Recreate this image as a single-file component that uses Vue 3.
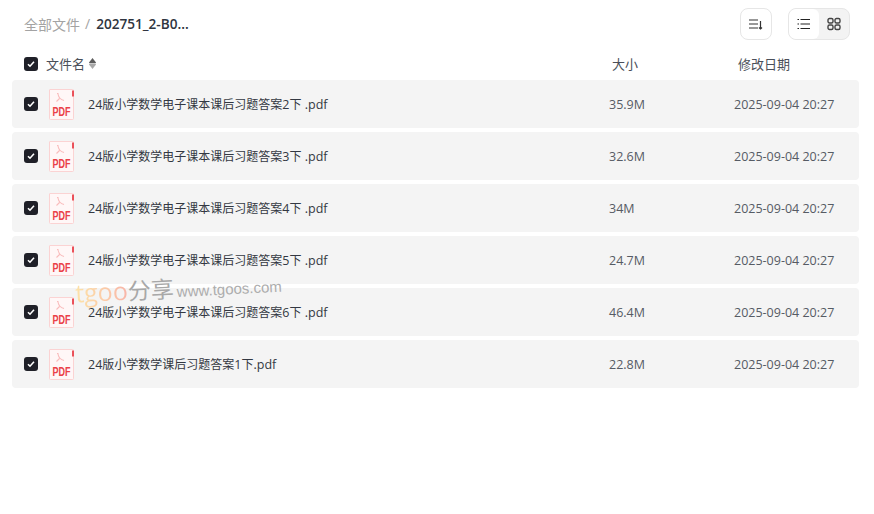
<template>
  <div class="page">
    <div class="topbar">
      <div class="crumbs">
        <span class="crumb-root">全部文件</span>
        <span class="crumb-sep">/</span>
        <span class="crumb-current">202751_2-B0...</span>
      </div>
      <div class="tools">
        <button type="button" class="tool-btn">
          <svg width="14" height="14" viewBox="0 0 14 14" fill="none" stroke="#333" stroke-width="1.2">
            <path d="M0 3h9M0 7h9M0 11h9" />
            <path d="M11.500 4v7.500" />
            <path d="M10 10.500l1.500 1.500 1.500-1.500" />
          </svg>
        </button>
        <div class="view-switch">
          <span class="view-item active">
            <svg width="14" height="14" viewBox="0 0 14 14" fill="none" stroke="#222" stroke-width="1.2">
              <path d="M3.500 2.500H13M3.500 7H13M3.500 11.500H13" />
              <path d="M0.500 2.500h1.500M0.500 7h1.500M0.500 11.500h1.500" />
            </svg>
          </span>
          <span class="view-item">
            <svg width="14" height="14" viewBox="0 0 14 14" fill="none" stroke="#444" stroke-width="1.4">
              <rect x="1" y="1.500" width="5" height="4.500" rx="1.500" />
              <rect x="8" y="1.500" width="5" height="4.500" rx="1.500" />
              <rect x="1" y="8" width="5" height="4.500" rx="1.500" />
              <rect x="8" y="8" width="5" height="4.500" rx="1.500" />
            </svg>
          </span>
        </div>
      </div>
    </div>

    <div class="table-head">
      <span class="check"><svg width="8" height="8" viewBox="0 0 8 8"><path d="M1 4.200l2 2 4-4.400" fill="none" stroke="#fff" stroke-width="1.600" /></svg></span>
      <div class="col-name head-name">
        文件名
        <svg class="sort" width="7" height="11" viewBox="0 0 7 11">
          <path d="M3.500 0L7 4.500Q7 5.200 6.300 5.200H.7Q0 5.200 0 4.500z" fill="#5c5c5c" />
          <path d="M3.500 11L0 6.500Q0 5.800 .7 5.800H6.300Q7 5.800 7 6.500z" fill="#a8a8a8" />
        </svg>
      </div>
      <div class="head-size">大小</div>
      <div class="head-date">修改日期</div>
    </div>

    <div class="rows">
      <div v-for="file in files" :key="file.name" class="row">
        <span class="check"><svg width="8" height="8" viewBox="0 0 8 8"><path d="M1 4.200l2 2 4-4.400" fill="none" stroke="#fff" stroke-width="1.600" /></svg></span>
        <svg class="pdf-icon" width="26" height="31" viewBox="0 0 26 31">
          <path d="M1 .5H23.500a1 1 0 0 1 1 1V29.500a1 1 0 0 1-1 1H1.500a1 1 0 0 1-1-1V1a.5.5 0 0 1 .5-.5z" fill="#fff7f7" stroke="#fbd3d3" />
          <path d="M24 1.500v6" stroke="#e8404a" stroke-width="1.800" />
          <path d="M9 5c.5 3 2 5.500 6 6.500M10.500 9.500L7.500 12.500M9.500 4.500H8" fill="none" stroke="#f9bcbc" stroke-width="1.100" />
          <text class="pdf-text" transform="translate(3.500 26.500) scale(.72 1)">PDF</text>
        </svg>
        <div class="col-name file-name">
          <span v-for="(run, i) in splitRuns(file.name)" :key="i" :class="{ cjk: run.cjk }">{{ run.text }}</span>
        </div>
        <div class="col-size file-size">{{ file.size }}</div>
        <div class="col-date file-date">{{ file.date }}</div>
      </div>
    </div>

    <div class="watermark">
      <span class="wm-brand">tgoo</span><span class="wm-cn">分享</span><span class="wm-url">www.tgoos.com</span>
    </div>
  </div>
</template>

<script setup>
const date = '2025-09-04 20:27'
const files = [
  { name: '24版小学数学电子课本课后习题答案2下 .pdf', size: '35.9M', date },
  { name: '24版小学数学电子课本课后习题答案3下 .pdf', size: '32.6M', date },
  { name: '24版小学数学电子课本课后习题答案4下 .pdf', size: '34M', date },
  { name: '24版小学数学电子课本课后习题答案5下 .pdf', size: '24.7M', date },
  { name: '24版小学数学电子课本课后习题答案6下 .pdf', size: '46.4M', date },
  { name: '24版小学数学课后习题答案1下.pdf', size: '22.8M', date }
]

// Chinese runs are set a little smaller than the latin ones
function splitRuns(name) {
  return name.match(/[\u4e00-\u9fff]+|[^\u4e00-\u9fff]+/g).map(text => ({
    text,
    cjk: /[\u4e00-\u9fff]/.test(text)
  }))
}
</script>

<style>
html, body {
  background: #fff;
}
</style>

<style scoped>
.page {
  position: relative;
  width: 874px;
  height: 514px;
  overflow: hidden;
  background: #fff;
  color: #333842;
  font-family: "Open Sans", "Noto Sans CJK SC", sans-serif;
  font-size: 13px;
}

.topbar {
  display: flex;
  justify-content: space-between;
  align-items: center;
  height: 32px;
  padding: 8px 24px 0;
}

.crumbs {
  display: flex;
  align-items: center;
  padding-bottom: 1px;
  font-size: 14px;
}

.crumb-root {
  color: #a3a3a3;
}

.crumb-sep {
  margin: 0 6px 0 5px;
  color: #a3a3a3;
}

.crumb-current {
  color: #2f3540;
  font-size: 13.6px;
  font-weight: 600;
}

.tools {
  display: flex;
  gap: 16px;
}

.tool-btn {
  display: flex;
  align-items: center;
  justify-content: center;
  width: 32px;
  height: 32px;
  padding: 0;
  background: #fff;
  border: 1px solid #e6e6e6;
  border-radius: 8px;
}

.view-switch {
  display: flex;
  width: 62px;
  height: 32px;
  box-sizing: border-box;
  border: 1px solid #e6e6e6;
  border-radius: 8px;
  background: #f3f3f3;
  overflow: hidden;
}

.view-item {
  display: flex;
  align-items: center;
  justify-content: center;
  flex: 1;
}

.view-item.active {
  background: #fff;
  border-radius: 6px;
}

.table-head {
  display: flex;
  align-items: center;
  height: 32px;
  padding: 8px 0 0 24px;
  color: #4a4f59;
}

.table-head > div {
  padding-bottom: 2px;
}

.rows {
  display: flex;
  flex-direction: column;
  gap: 4px;
  margin: 0 15px 0 12px;
}

.row {
  display: flex;
  align-items: center;
  height: 48px;
  padding-left: 12px;
  background: #f4f4f4;
  border-radius: 4px;
}

.check {
  display: flex;
  align-items: center;
  justify-content: center;
  flex: none;
  width: 14px;
  height: 14px;
  background: #1f2028;
  border-radius: 3px;
}

.pdf-icon {
  flex: none;
  margin-left: 11px;
}

.pdf-text {
  font-family: "Liberation Sans", sans-serif;
  font-size: 12.5px;
  font-weight: 700;
  fill: #ea4048;
}

.col-name {
  flex: 1;
  min-width: 0;
}

.head-name {
  display: flex;
  align-items: center;
  gap: 4px;
  margin-left: 8px;
}

.file-name {
  margin-left: 13px;
  font-size: 12.5px;
}

.cjk {
  font-size: 12px;
}

.col-size {
  flex: none;
  width: 125px;
}

.col-date {
  flex: none;
  width: 125px;
}

.head-size {
  flex: none;
  width: 126px;
}

.head-date {
  flex: none;
  width: 136px;
}

.file-size,
.file-date {
  font-size: 12.5px;
  color: #565b64;
}

.watermark {
  position: absolute;
  left: 75px;
  top: 270px;
  display: flex;
  align-items: baseline;
  transform: rotate(-3deg);
  pointer-events: none;
  white-space: nowrap;
}

.wm-brand {
  font-size: 25px;
  background: linear-gradient(90deg, #fde3a8, #fbc9a8 60%, #f8b4a8);
  -webkit-background-clip: text;
  background-clip: text;
  color: transparent;
}

.wm-cn {
  font-size: 23px;
  color: #a8a8a8;
}

.wm-url {
  margin-left: 3px;
  font-family: "Liberation Sans", sans-serif;
  font-size: 15px;
  color: #adadad;
}
</style>
